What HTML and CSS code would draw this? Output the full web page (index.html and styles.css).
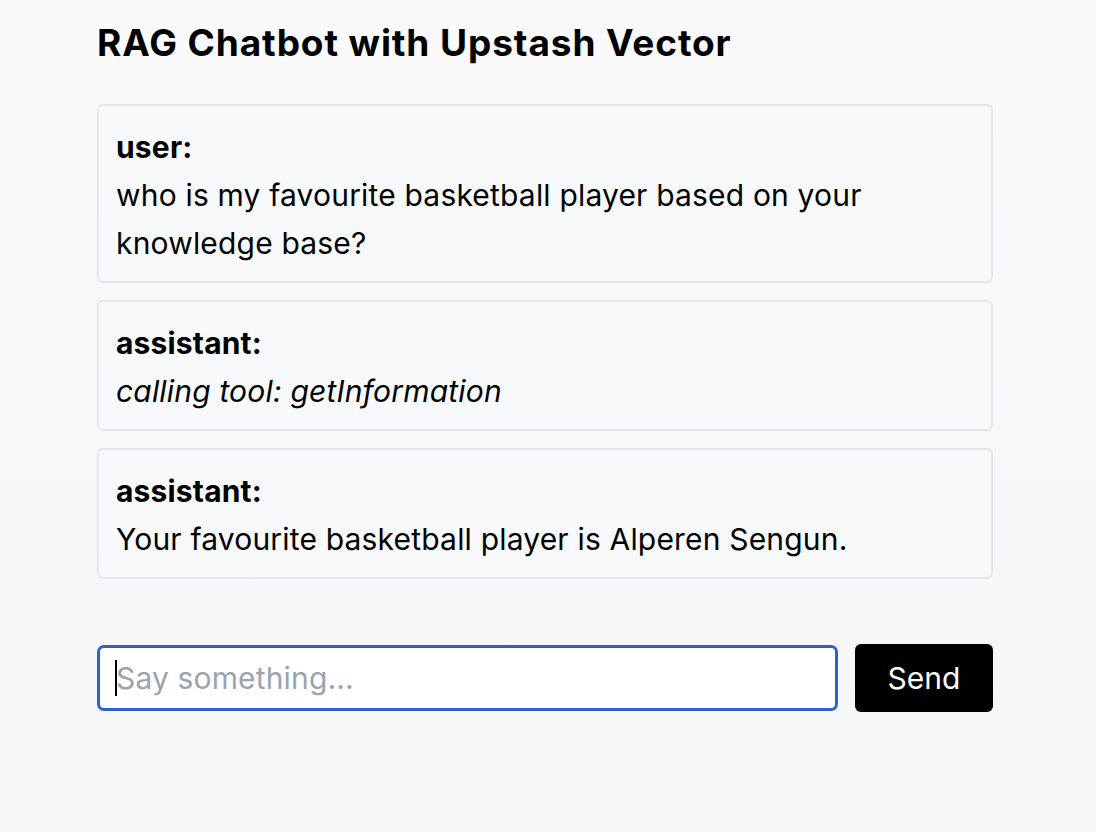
FILE: index.html
```html
<!DOCTYPE html>
<html>
<head>
<meta charset="utf-8">
<link rel="stylesheet" href="styles.css">
</head>
<body>
<main class="page">
  <h1 class="title">RAG Chatbot with Upstash Vector</h1>
  <div class="messages">
    <div class="msg">
      <div class="role">user:</div>
      <div class="content">who is my favourite basketball player based on your knowledge base?</div>
    </div>
    <div class="msg">
      <div class="role">assistant:</div>
      <div class="content tool">calling tool: getInformation</div>
    </div>
    <div class="msg">
      <div class="role">assistant:</div>
      <div class="content">Your favourite basketball player is Alperen Sengun.</div>
    </div>
  </div>
  <form class="composer">
    <div class="input"><span class="caret"></span><span class="placeholder">Say something...</span></div>
    <button type="button" class="send">Send</button>
  </form>
</main>
</body>
</html>
```
FILE: styles.css
```css
html, body {
  margin: 0;
  padding: 0;
}
body {
  min-height: 832px;
  background: linear-gradient(to bottom, #fafafb, #f5f6f8);
  font-family: Inter, "Noto Sans", sans-serif;
  color: #000;
}
.page {
  width: 896px;
  margin-left: 97px;
  padding-top: 19px;
}
.title {
  margin: 0 0 37px 0;
  font-family: Inter, "Noto Sans", sans-serif;
  font-weight: 700;
  font-size: 37px;
  line-height: 48px;
  letter-spacing: 0.9px;
}
.messages {
  display: flex;
  flex-direction: column;
  gap: 17px;
}
.msg {
  border: 2px solid #e6e7ea;
  border-radius: 6px;
  background: #f8f9fa;
  padding: 17px 17px 14px 17px;
  font-size: 30px;
  line-height: 48px;
  letter-spacing: 0.18px;
}
.role {
  font-weight: 700;
}
.tool {
  font-style: italic;
}
.composer {
  display: flex;
  align-items: center;
  gap: 17px;
  margin-top: 65px;
}
.input {
  flex: 1;
  height: 66px;
  box-sizing: border-box;
  border: 3px solid #2b63c9;
  border-radius: 7px;
  background: #fff;
  display: flex;
  align-items: center;
  padding-left: 15px;
  font-size: 30px;
}
.caret {
  width: 2px;
  height: 36px;
  background: #000;
  margin-right: -1px;
}
.placeholder {
  color: #9ca3af;
  letter-spacing: 0.15px;
}
.send {
  width: 138px;
  height: 68px;
  background: #000;
  color: #fff;
  border: none;
  border-radius: 6px;
  font-family: Inter, "Noto Sans", sans-serif;
  font-size: 30px;
}
```
